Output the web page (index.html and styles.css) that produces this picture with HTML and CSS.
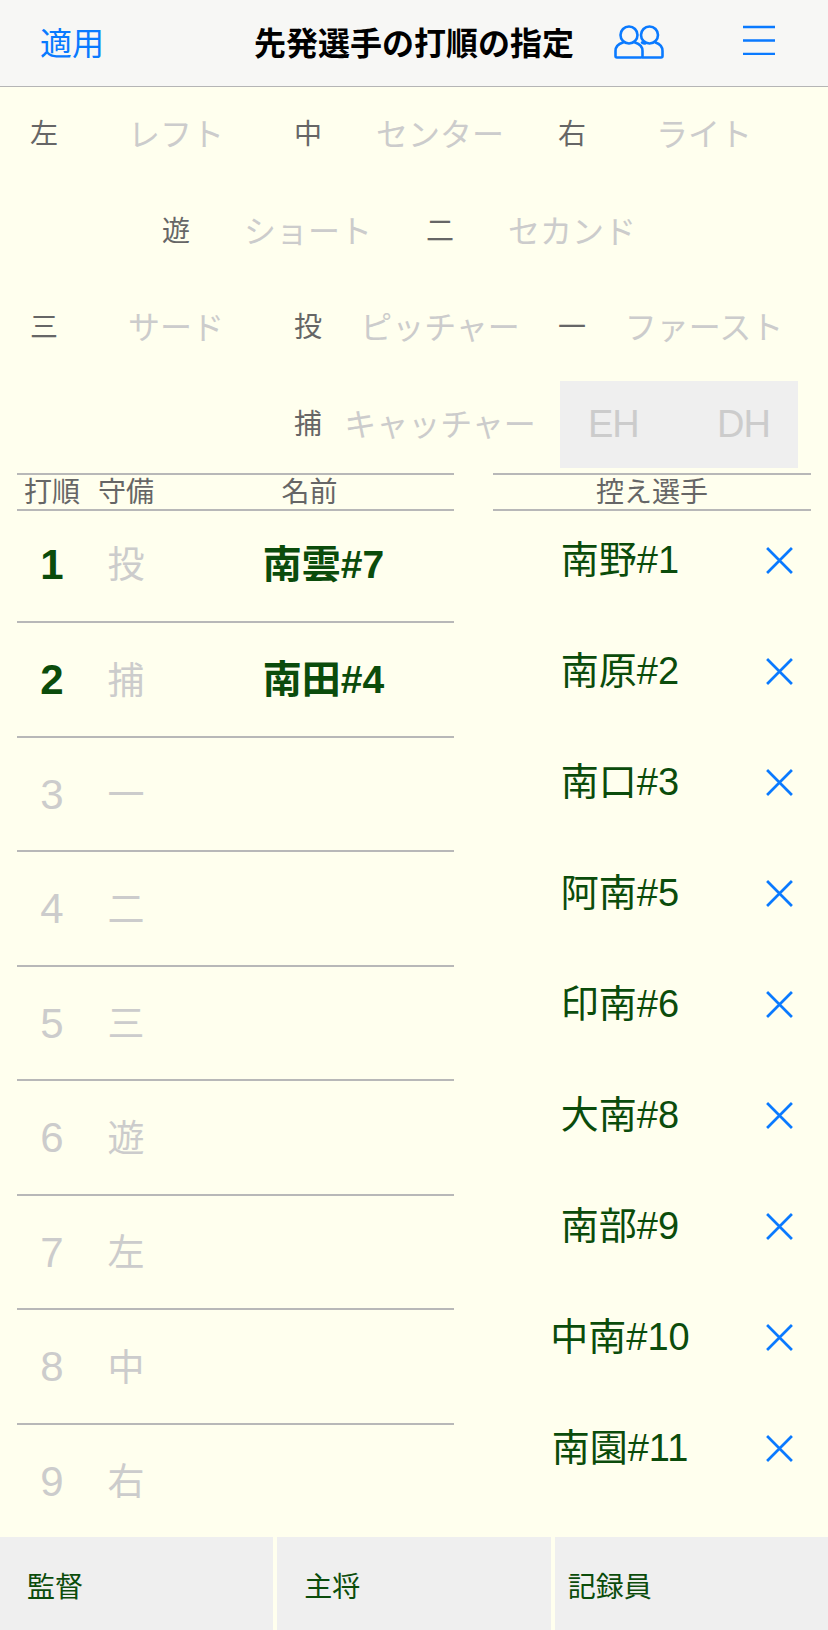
FILE: index.html
```html
<!DOCTYPE html>
<html lang="ja">
<head>
    <meta charset="UTF-8">
    <meta name="viewport" content="width=device-width, initial-scale=1.0">
    <title>先発選手の打順の指定</title>
    <link rel="stylesheet" href="styles.css">
</head>
<body>
    <header class="topbar">
        <a class="apply">適用</a>
        <h1 class="title">先発選手の打順の指定</h1>
        <div class="topbar-icons">
            <svg class="icon-people" width="50" height="34" viewBox="0 0 50 34" fill="none" stroke="#0a7aff" stroke-width="2.6" stroke-linejoin="round" stroke-linecap="round">
                <circle cx="15" cy="10" r="8.5"/>
                <circle cx="35.5" cy="10" r="8.5"/>
                <path d="M9 17.5 C4 19 1.5 22 1.5 26 V31 Q1.5 32.5 3 32.5 H27 Q28.5 32.5 28.5 31 V26 C28.5 22 26 19 21 17.5"/>
                <path d="M28 17.5 C29 18 30 18.3 31 18.5 M41.5 17.5 C46 19 48.5 22 48.5 26 V31 Q48.5 32.5 47 32.5 H29"/>
            </svg>
            <svg class="icon-menu" width="32" height="30" viewBox="0 0 32 30" stroke="#0a7aff" stroke-width="2.4">
                <path d="M0 2H32M0 15.5H32M0 29H32"/>
            </svg>
        </div>
    </header>

    <section class="field">
        <span class="pos">左</span><span class="pos-name">レフト</span>
        <span class="pos">中</span><span class="pos-name">センター</span>
        <span class="pos">右</span><span class="pos-name">ライト</span>

        <span class="pos start-2">遊</span><span class="pos-name">ショート</span>
        <span class="pos">二</span><span class="pos-name">セカンド</span>

        <span class="pos start-1">三</span><span class="pos-name">サード</span>
        <span class="pos">投</span><span class="pos-name">ピッチャー</span>
        <span class="pos">一</span><span class="pos-name">ファースト</span>

        <span class="pos start-3">捕</span><span class="pos-name">キャッチャー</span>
        <div class="extra">
            <span class="pos-name">EH</span>
            <span class="pos-name">DH</span>
        </div>
    </section>

    <main class="lists">
        <div class="order">
            <div class="order-head">
                <span>打順</span><span>守備</span><span>名前</span>
            </div>
            <div class="order-row filled"><span class="num">1</span><span class="def">投</span><span class="name">南雲#7</span></div>
            <div class="order-row filled"><span class="num">2</span><span class="def">捕</span><span class="name">南田#4</span></div>
            <div class="order-row"><span class="num">3</span><span class="def">一</span><span class="name"></span></div>
            <div class="order-row"><span class="num">4</span><span class="def">二</span><span class="name"></span></div>
            <div class="order-row"><span class="num">5</span><span class="def">三</span><span class="name"></span></div>
            <div class="order-row"><span class="num">6</span><span class="def">遊</span><span class="name"></span></div>
            <div class="order-row"><span class="num">7</span><span class="def">左</span><span class="name"></span></div>
            <div class="order-row"><span class="num">8</span><span class="def">中</span><span class="name"></span></div>
            <div class="order-row"><span class="num">9</span><span class="def">右</span><span class="name"></span></div>
        </div>

        <div class="bench">
            <div class="bench-head">控え選手</div>
            <ul class="bench-list">
                <li class="bench-row"><span>南野#1</span><svg class="remove" viewBox="0 0 28 28"><path d="M2 2L26 26M26 2L2 26"/></svg></li>
                <li class="bench-row"><span>南原#2</span><svg class="remove" viewBox="0 0 28 28"><path d="M2 2L26 26M26 2L2 26"/></svg></li>
                <li class="bench-row"><span>南口#3</span><svg class="remove" viewBox="0 0 28 28"><path d="M2 2L26 26M26 2L2 26"/></svg></li>
                <li class="bench-row"><span>阿南#5</span><svg class="remove" viewBox="0 0 28 28"><path d="M2 2L26 26M26 2L2 26"/></svg></li>
                <li class="bench-row"><span>印南#6</span><svg class="remove" viewBox="0 0 28 28"><path d="M2 2L26 26M26 2L2 26"/></svg></li>
                <li class="bench-row"><span>大南#8</span><svg class="remove" viewBox="0 0 28 28"><path d="M2 2L26 26M26 2L2 26"/></svg></li>
                <li class="bench-row"><span>南部#9</span><svg class="remove" viewBox="0 0 28 28"><path d="M2 2L26 26M26 2L2 26"/></svg></li>
                <li class="bench-row"><span>中南#10</span><svg class="remove" viewBox="0 0 28 28"><path d="M2 2L26 26M26 2L2 26"/></svg></li>
                <li class="bench-row"><span>南園#11</span><svg class="remove" viewBox="0 0 28 28"><path d="M2 2L26 26M26 2L2 26"/></svg></li>
            </ul>
        </div>
    </main>

    <footer class="staff">
        <div class="staff-cell">監督</div>
        <div class="staff-cell">主将</div>
        <div class="staff-cell tight">記録員</div>
    </footer>
</body>
</html>
```

FILE: styles.css
```css
* {
    box-sizing: border-box;
}

html, body {
    margin: 0;
    height: 1630px;
    overflow: hidden;
}

body {
    font-family: "Liberation Sans", "Noto Sans CJK JP", sans-serif;
    background: #ffffee;
    color: #666;
}

.topbar {
    height: 87px;
    display: grid;
    grid-template-columns: 1fr auto 1fr;
    align-items: center;
    padding-bottom: 5px;
    background: #f7f7f5;
    border-bottom: 1px solid #b5b5b5;
}

.apply {
    margin-left: 40px;
    font-size: 32px;
    color: #0a7aff;
}

.title {
    margin: 0;
    font-size: 32px;
    font-weight: bold;
    color: #000;
}

.topbar-icons {
    display: flex;
    align-items: center;
    margin-left: 40px;
    gap: 79px;
}

.icon-people {
    margin-top: 2px;
}

.icon-menu {
    margin-top: -2px;
}

/* six columns, the labels sit centred in them */
.field {
    display: grid;
    grid-template-columns: repeat(6, 132px);
    grid-auto-rows: 96.5px;
    margin-left: -22px;
    justify-items: center;
    align-items: center;
    height: 386px;
}

.pos {
    margin-bottom: 6px;
    font-size: 28px;
    color: #666;
}

.pos-name {
    margin-bottom: 6px;
    font-size: 32px;
    color: #ccc;
    white-space: nowrap;
}

.start-1 {
    grid-column-start: 1;
}

.start-2 {
    grid-column-start: 2;
}

.start-3 {
    grid-column-start: 3;
}

.extra {
    grid-column: 5 / 7;
    justify-self: start;
    margin-left: 54px;
    width: 238px;
    height: 87px;
    display: flex;
    align-items: center;
    justify-content: space-between;
    padding: 0 28px;
    background: #efefef;
}

.extra .pos-name {
    margin-bottom: 0;
    font-size: 38px;
    letter-spacing: -1px;
}

.lists {
    display: flex;
    gap: 39px;
    padding-left: 17px;
    height: 1063.5px;
}

.order {
    width: 437px;
}

.order-head, .order-row {
    display: grid;
    grid-template-columns: 70px 78px 1fr;
    align-items: center;
    justify-items: center;
    border-top: 2px solid #b8b8b8;
}

.order-head {
    height: 36px;
    font-size: 28px;
    line-height: 36px;
}

.order-row {
    height: 114.5px;
    color: #ccc;
}

.order-head + .order-row {
    height: 112px;
    padding-bottom: 5px;
}

.num {
    margin-top: 2px;
    font-size: 42px;
}

.def {
    margin-bottom: 3px;
    font-size: 37px;
}

.name {
    margin-bottom: 6px;
    padding-left: 28px;
    font-size: 39px;
    font-weight: bold;
    color: #0b4c0b;
}

.filled .num {
    font-weight: bold;
    color: #0b4c0b;
}

.bench {
    width: 318px;
}

.bench-head {
    height: 38px;
    font-size: 28px;
    line-height: 36px;
    text-align: center;
    border-top: 2px solid #b8b8b8;
    border-bottom: 2px solid #b8b8b8;
}

.bench-list {
    list-style: none;
    margin: -6px 0 0;
    padding: 0;
}

.bench-row {
    height: 111px;
    display: grid;
    grid-template-columns: 254px 64px;
    align-items: center;
    justify-items: center;
    font-size: 38px;
    color: #0b4c0b;
}

.bench-row span {
    margin-bottom: 8px;
}

.remove {
    width: 29px;
    height: 29px;
    fill: none;
    stroke: #0a7aff;
    stroke-width: 2.6;
}

.staff {
    display: grid;
    grid-template-columns: repeat(3, 1fr);
    gap: 4px;
    height: 94px;
}

.staff-cell {
    display: flex;
    align-items: center;
    padding: 3px 0 0 27px;
    font-size: 28px;
    background: #efefef;
    color: #0b4c0b;
}

.staff-cell.tight {
    padding-left: 13px;
}
```
